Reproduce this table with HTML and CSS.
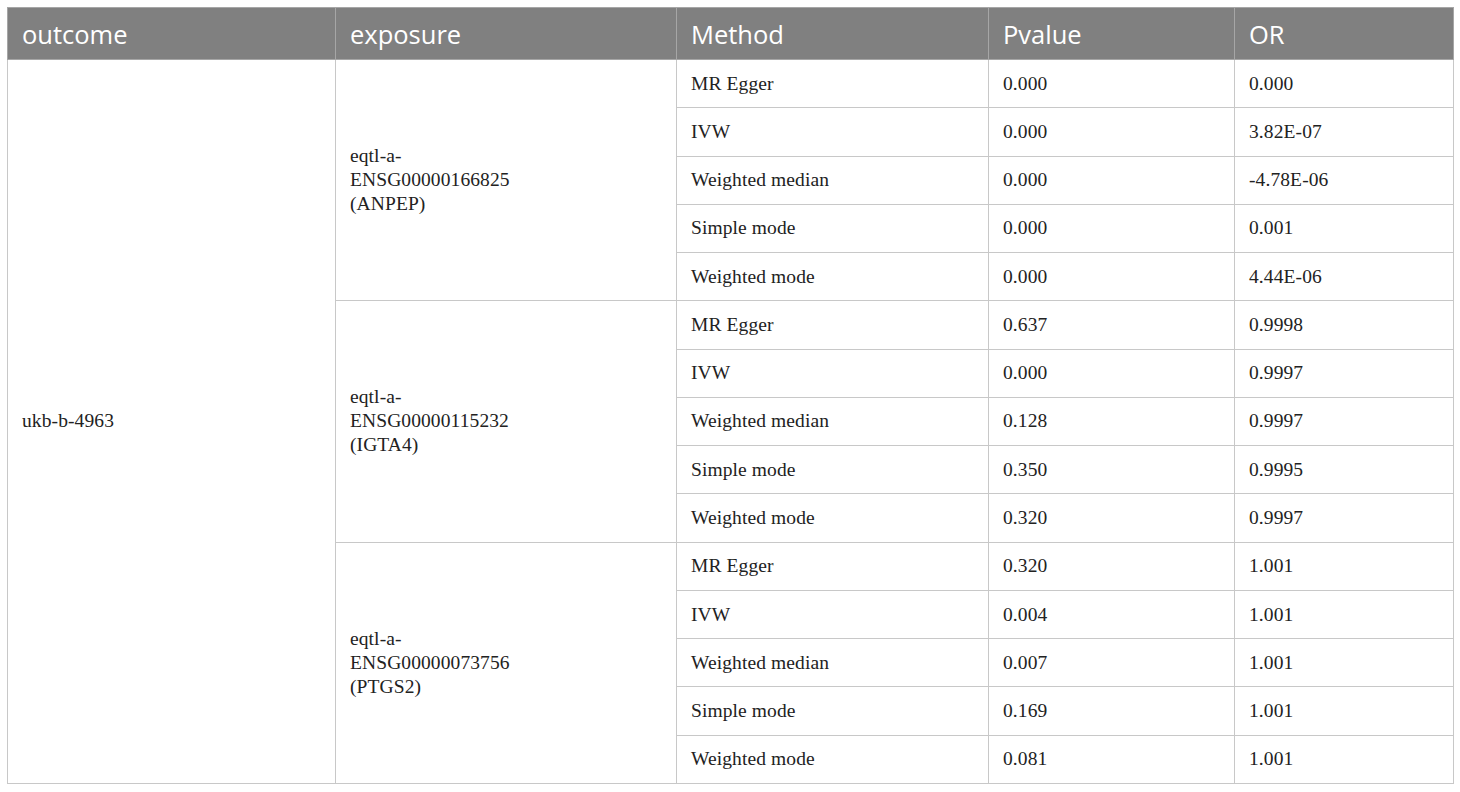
FILE: index.html
```html
<!DOCTYPE html>
<html>
<head>
<meta charset="utf-8">
<link rel="stylesheet" href="styles.css">
</head>
<body>
<table class="results">
  <colgroup>
    <col class="c1"><col class="c2"><col class="c3"><col class="c4"><col class="c5">
  </colgroup>
  <thead>
    <tr><th>outcome</th><th>exposure</th><th>Method</th><th>Pvalue</th><th>OR</th></tr>
  </thead>
  <tbody>
    <tr><td rowspan="15">ukb-b-4963</td><td rowspan="5" class="exp">eqtl-a-<br>ENSG00000166825<br>(ANPEP)</td><td>MR Egger</td><td>0.000</td><td>0.000</td></tr>
    <tr><td>IVW</td><td>0.000</td><td>3.82E-07</td></tr>
    <tr><td>Weighted median</td><td>0.000</td><td>-4.78E-06</td></tr>
    <tr><td>Simple mode</td><td>0.000</td><td>0.001</td></tr>
    <tr><td>Weighted mode</td><td>0.000</td><td>4.44E-06</td></tr>
    <tr><td rowspan="5" class="exp">eqtl-a-<br>ENSG00000115232<br>(IGTA4)</td><td>MR Egger</td><td>0.637</td><td>0.9998</td></tr>
    <tr><td>IVW</td><td>0.000</td><td>0.9997</td></tr>
    <tr><td>Weighted median</td><td>0.128</td><td>0.9997</td></tr>
    <tr><td>Simple mode</td><td>0.350</td><td>0.9995</td></tr>
    <tr><td>Weighted mode</td><td>0.320</td><td>0.9997</td></tr>
    <tr><td rowspan="5" class="exp">eqtl-a-<br>ENSG00000073756<br>(PTGS2)</td><td>MR Egger</td><td>0.320</td><td>1.001</td></tr>
    <tr><td>IVW</td><td>0.004</td><td>1.001</td></tr>
    <tr><td>Weighted median</td><td>0.007</td><td>1.001</td></tr>
    <tr><td>Simple mode</td><td>0.169</td><td>1.001</td></tr>
    <tr><td>Weighted mode</td><td>0.081</td><td>1.001</td></tr>
  </tbody>
</table>
</body>
</html>
```
FILE: styles.css
```css
html, body {
  margin: 0;
  padding: 0;
  background: #ffffff;
}
.results {
  margin: 7px 0 0 7px;
  width: 1446px;
  border-collapse: collapse;
  table-layout: fixed;
  font-family: "Liberation Serif", "DejaVu Serif", serif;
  font-size: 19.5px;
  letter-spacing: 0.1px;
  color: #222222;
}
.c1 { width: 328px; }
.c2 { width: 341px; }
.c3 { width: 312px; }
.c4 { width: 246px; }
.c5 { width: 219px; }
.results th {
  background: #808080;
  color: #ffffff;
  font-family: "Open Sans", "Noto Sans", sans-serif;
  font-weight: 400;
  font-size: 25.5px;
  letter-spacing: 0;
  text-align: left;
  height: 52px;
  padding: 0 14px;
  border: 1px solid #a6a6a6;
  box-sizing: border-box;
}
.results td {
  height: 48.27px;
  padding: 0 14px;
  border: 1px solid #c8c8c8;
  vertical-align: middle;
  line-height: 24px;
  box-sizing: border-box;
}
```
